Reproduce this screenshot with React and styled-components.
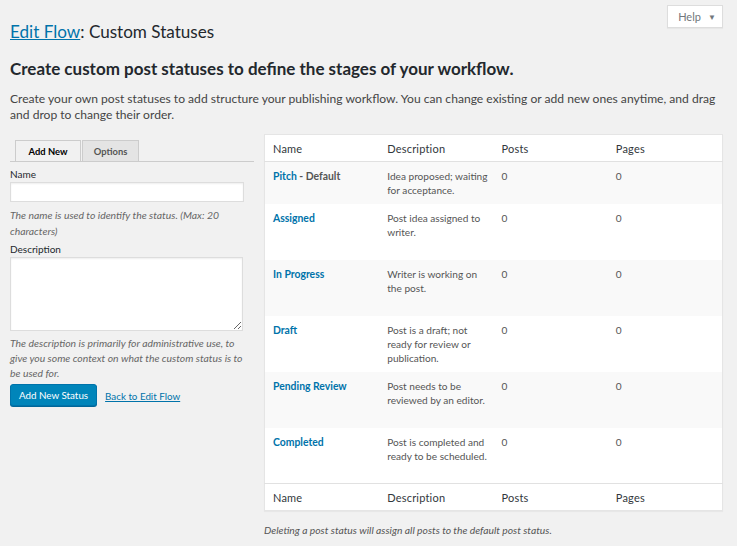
import React from 'react'
import styled, { createGlobalStyle } from 'styled-components'

const GlobalStyle = createGlobalStyle`
body {
  margin: 0;
  background: #f1f1f1;
  font-family: Lato, "Open Sans", sans-serif;
  color: #23282d;
}
`

const Wrap = styled.div`
  padding: 0 14px 0 10px;
  height: 546px;
  overflow: hidden;
  box-sizing: border-box;
`
const TopBar = styled.div`
  display: flex;
  justify-content: flex-end;
  padding-top: 5px;
  height: 22px;
`
const HelpButton = styled.button`
  width: 56px;
  height: 23px;
  background: #fff;
  border: 1px solid #ddd;
  box-shadow: 0 1px 1px rgba(0, 0, 0, 0.04);
  font-family: inherit;
  font-size: 11px;
  color: #72777c;
  padding: 0 0 0 4px;
  display: flex;
  align-items: center;
  justify-content: center;
  gap: 7px;
`
const Caret = styled.span`
  font-size: 8px;
`
const Title = styled.h1`
  margin: -10px 0 0;
  font-size: 17.1px;
  font-weight: 400;
  line-height: 30px;
`
const Link = styled.a`
  color: #0073aa;
  text-decoration: underline;
`
const Heading = styled.h2`
  margin: 12px 0 0;
  font-size: 17px;
  font-weight: 700;
  line-height: 20px;
`
const Intro = styled.p`
  margin: 12px 0 0;
  font-size: 12.1px;
  line-height: 16px;
  color: #444;
`
const Columns = styled.div`
  display: flex;
  gap: 10px;
  margin-top: 11px;
  align-items: flex-start;
`
const Left = styled.div`
  width: 244px;
  padding-top: 6px;
`
const Tabs = styled.div`
  display: flex;
  gap: 1px;
  padding-left: 5px;
  border-bottom: 1px solid #ccc;
`
const Tab = styled.div`
  height: 21px;
  line-height: 21px;
  font-size: 9.4px;
  font-weight: 700;
  white-space: nowrap;
  color: ${p => (p.$active ? '#000' : '#555')};
  background: ${p => (p.$active ? '#f1f1f1' : '#e4e4e4')};
  border: 1px solid #ccc;
  border-bottom: none;
  margin-bottom: ${p => (p.$active ? '-1px' : '0')};
  width: ${p => p.$w}px;
  box-sizing: border-box;
  text-align: center;
`
const Label = styled.div`
  font-size: 10px;
  color: #23282d;
  margin-top: ${p => p.$top}px;
  line-height: 16px;
`
const Input = styled.input`
  display: block;
  width: 234px;
  height: 20px;
  box-sizing: border-box;
  border: 1px solid #ddd;
  box-shadow: inset 0 1px 2px rgba(0, 0, 0, 0.07);
  background: #fff;
`
const TextArea = styled.textarea`
  display: block;
  width: 233px;
  height: 74px;
  box-sizing: border-box;
  border: 1px solid #ddd;
  box-shadow: inset 0 1px 2px rgba(0, 0, 0, 0.07);
  background: #fff;
  resize: both;
`
const Hint = styled.p`
  margin: 5px 0 0;
  font-size: 10.4px;
  font-style: italic;
  line-height: ${p => p.$lh || 15}px;
  color: #666;
`
const Actions = styled.div`
  display: flex;
  align-items: center;
  gap: 8px;
  margin-top: 3px;
`
const Primary = styled.button`
  height: 22px;
  padding: 0 8px;
  background: #0085ba;
  border: 1px solid #0073aa;
  border-radius: 3px;
  box-shadow: 0 1px 0 #006799;
  color: #fff;
  font-family: inherit;
  font-size: 9.8px;
`
const SmallLink = styled(Link)`
  font-size: 9.8px;
  margin-top: 2px;
`
const Right = styled.div`
  flex: 1;
`
const Table = styled.table`
  width: 100%;
  border-collapse: collapse;
  table-layout: fixed;
  background: #fff;
  border: 1px solid #e5e5e5;
  box-shadow: 0 1px 1px rgba(0, 0, 0, 0.04);
`
const Th = styled.th`
  text-align: left;
  font-weight: 400;
  font-size: 11px;
  letter-spacing: 0.2px;
  color: #32373c;
  height: 26px;
  padding: 0 8px;
  width: 25%;
  border-${p => (p.$foot ? 'top' : 'bottom')}: 1px solid #e1e1e1;
`
const Tr = styled.tr`
  background: ${p => (p.$alt ? '#f9f9f9' : '#fff')};
`
const Td = styled.td`
  vertical-align: top;
  padding: 7px 2px 0 8px;
  height: ${p => p.$h}px;
  box-sizing: border-box;
  font-size: 10.1px;
  line-height: 14px;
  color: #555;
`
const RowTitle = styled.strong`
  color: #0073aa;
  font-size: 10.4px;
  font-weight: 700;
`
const Muted = styled.span`
  color: #555;
  font-size: 10.4px;
  font-weight: 700;
`
const Note = styled.p`
  margin: 13px 0 0;
  font-size: 10.3px;
  font-style: italic;
  color: #555;
`

const statuses = [
  { name: 'Pitch', def: true, desc: 'Idea proposed; waiting for acceptance.', h: 42 },
  { name: 'Assigned', desc: 'Post idea assigned to writer.', h: 56 },
  { name: 'In Progress', desc: 'Writer is working on the post.', h: 56 },
  { name: 'Draft', desc: 'Post is a draft; not ready for review or publication.', h: 56 },
  { name: 'Pending Review', desc: 'Post needs to be reviewed by an editor.', h: 56 },
  { name: 'Completed', desc: 'Post is completed and ready to be scheduled.', h: 56 },
]

function HeadRow({ foot }) {
  return (
    <tr>
      <Th $foot={foot}>Name</Th>
      <Th $foot={foot}>Description</Th>
      <Th $foot={foot}>Posts</Th>
      <Th $foot={foot}>Pages</Th>
    </tr>
  )
}

export default function App() {
  return (
    <Wrap>
      <GlobalStyle />
      <TopBar>
        <HelpButton>Help <Caret>▼</Caret></HelpButton>
      </TopBar>
      <Title><Link href="#">Edit Flow</Link>: Custom Statuses</Title>
      <Heading>Create custom post statuses to define the stages of your workflow.</Heading>
      <Intro>
        Create your own post statuses to add structure your publishing workflow. You can change existing or add new ones anytime, and drag and drop to change their order.
      </Intro>
      <Columns>
        <Left>
          <Tabs>
            <Tab $active $w={66}>Add New</Tab>
            <Tab $w={57}>Options</Tab>
          </Tabs>
          <Label $top={4}>Name</Label>
          <Input />
          <Hint $lh={16}>The name is used to identify the status. (Max: 20 characters)</Hint>
          <Label $top={2}>Description</Label>
          <TextArea />
          <Hint>The description is primarily for administrative use, to give you some context on what the custom status is to be used for.</Hint>
          <Actions>
            <Primary>Add New Status</Primary>
            <SmallLink href="#">Back to Edit Flow</SmallLink>
          </Actions>
        </Left>
        <Right>
          <Table>
            <thead><HeadRow /></thead>
            <tbody>
              {statuses.map((s, i) => (
                <Tr key={s.name} $alt={i % 2 === 0}>
                  <Td $h={s.h}>
                    <RowTitle>{s.name}</RowTitle>
                    {s.def && <Muted> - Default</Muted>}
                  </Td>
                  <Td $h={s.h}>{s.desc}</Td>
                  <Td $h={s.h}>0</Td>
                  <Td $h={s.h}>0</Td>
                </Tr>
              ))}
            </tbody>
            <tfoot><HeadRow foot /></tfoot>
          </Table>
          <Note>Deleting a post status will assign all posts to the default post status.</Note>
        </Right>
      </Columns>
    </Wrap>
  )
}
